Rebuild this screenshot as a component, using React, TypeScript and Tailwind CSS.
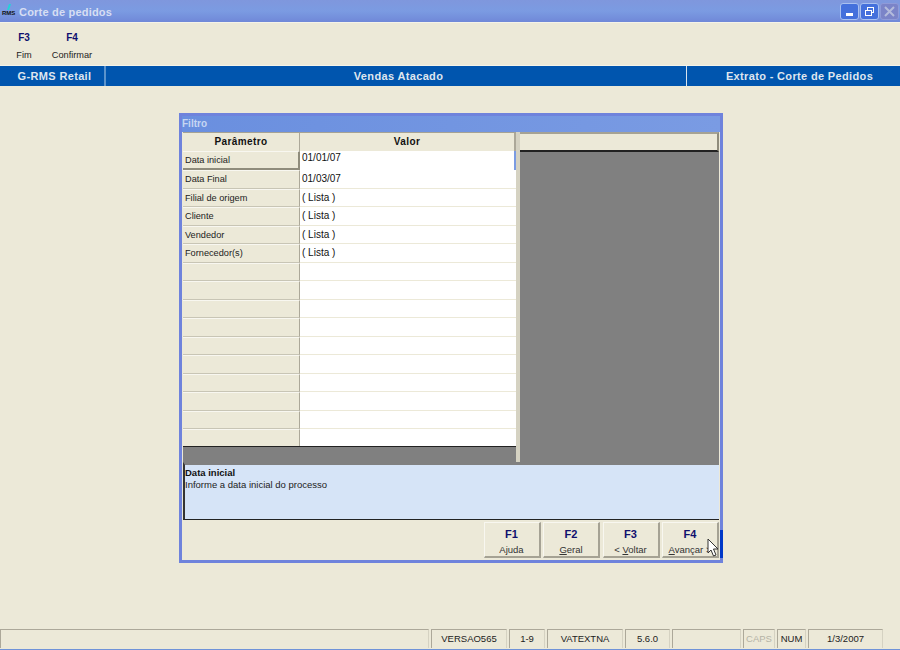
import React from "react";

const sans = "font-['Liberation_Sans',Arial,sans-serif]";

const rows = [
  ["Data inicial", "01/01/07"],
  ["Data Final", "01/03/07"],
  ["Filial de origem", "( Lista )"],
  ["Cliente", "( Lista )"],
  ["Vendedor", "( Lista )"],
  ["Fornecedor(s)", "( Lista )"],
  ["", ""],
  ["", ""],
  ["", ""],
  ["", ""],
  ["", ""],
  ["", ""],
  ["", ""],
  ["", ""],
  ["", ""],
  ["", ""],
];

const status = [
  { w: "w-[429px]", t: "" },
  { w: "w-[76px]", t: "VERSAO565" },
  { w: "w-[36px]", t: "1-9" },
  { w: "w-[76px]", t: "VATEXTNA" },
  { w: "w-[45px]", t: "5.6.0" },
  { w: "w-[69px]", t: "" },
  { w: "w-[32px]", t: "CAPS", off: true },
  { w: "w-[29px]", t: "NUM" },
  { w: "w-[75px]", t: "1/3/2007" },
];

const FnButton = (props: { fkey: string; children: React.ReactNode }) => (
  <div className="w-[57px] h-[36px] bg-[#ece9d8] border-t border-l border-t-[#f8f7f0] border-l-[#f8f7f0] border-r-2 border-b-2 border-r-[#a5a294] border-b-[#a5a294] flex flex-col items-center">
    <div className="text-[11px] leading-[12px] mt-[5px] font-bold text-[#10106e]">{props.fkey}</div>
    <div className="text-[9.5px] leading-[12px] mt-[4px] text-[#333]">{props.children}</div>
  </div>
);

export default function App() {
  return (
    <div className={`${sans} w-[900px] h-[650px] bg-[#ece9d8] flex flex-col overflow-hidden relative`}>
      {/* title bar */}
      <div className="h-[23px] shrink-0 bg-gradient-to-b from-[#7f97dd] via-[#7b9be2] to-[#7088d8] border-b border-[#f5f3e8] flex items-center">
        <svg width="16" height="14" viewBox="0 0 16 14" className="ml-[1px] shrink-0">
          <path d="M8 0 L10 0 L8 6 L6 6 Z" fill="#22d4d8" />
          <text x="1" y="11" fontSize="6" fontWeight="bold" fill="#111">RMS</text>
        </svg>
        <span className="ml-[2px] mt-[2px] text-[11px] font-bold tracking-[0.2px] text-[#d7def3]">Corte de pedidos</span>
        <div className="ml-auto flex gap-[1px] mr-[1px]">
          <div className="w-[19px] h-[17px] rounded-[3px] bg-[#4470dc] border border-[#a9c0f0] flex items-end justify-center pb-[3px]">
            <div className="w-[7px] h-[3px] bg-white" />
          </div>
          <div className="w-[19px] h-[17px] rounded-[3px] bg-[#4470dc] border border-[#a9c0f0] flex items-center justify-center">
            <svg width="11" height="11" viewBox="0 0 11 11" fill="none" stroke="white">
              <rect x="3.5" y="1.5" width="6" height="5" />
              <rect x="1.5" y="4.5" width="6" height="5" fill="#4470dc" />
            </svg>
          </div>
          <div className="w-[19px] h-[17px] rounded-[3px] bg-[#7b84c8] border border-[#8f9ad8] flex items-center justify-center">
            <svg width="11" height="11" viewBox="0 0 11 11" stroke="#b4bbdc" strokeWidth="2">
              <path d="M1 1 L10 10 M10 1 L1 10" />
            </svg>
          </div>
        </div>
      </div>

      {/* toolbar */}
      <div className="h-[42px] shrink-0 flex">
        <div className="w-[48px] flex flex-col items-center">
          <div className="text-[10px] leading-[12px] mt-[9px] font-bold text-[#10106e]">F3</div>
          <div className="text-[9.2px] leading-[12px] mt-[5px] text-[#222]">Fim</div>
        </div>
        <div className="w-[48px] flex flex-col items-center">
          <div className="text-[10px] leading-[12px] mt-[9px] font-bold text-[#10106e]">F4</div>
          <div className="text-[9.2px] leading-[12px] mt-[5px] text-[#222]">Confirmar</div>
        </div>
      </div>

      {/* blue band */}
      <div className="h-[21px] shrink-0 bg-[#0055ae] border-t border-[#f5f3e8] flex items-center text-[11px] font-bold tracking-[0.35px] text-[#dfe6ee]">
        <div className="w-[106px] h-full pl-[5px] text-center leading-[20px] border-r-2 border-[#5b93cc]">G-RMS Retail</div>
        <div className="w-[581px] h-full pl-[5px] text-center leading-[20px] border-r border-[#d7e3ee]">Vendas Atacado</div>
        <div className="flex-1 pl-[12px] text-center leading-[20px]">Extrato - Corte de Pedidos</div>
      </div>

      {/* filter window */}
      <div className="ml-[179px] mt-[27px] w-[544px] h-[450px] shrink-0 border-[3px] border-[#6f83dc] bg-[#ece9d8] flex flex-col">
        <div className="h-[16px] shrink-0 bg-gradient-to-r from-[#6a8fdf] to-[#7a9be3] text-[10px] leading-[16px] font-bold text-[#c6d6f2]">
          Filtro
        </div>
        <div className="mx-px flex h-[330px] shrink-0">
          {/* grid */}
          <div className="w-[333px] shrink-0 flex flex-col">
            <div className="flex h-[19px] shrink-0 border-t border-[#a5a294]">
              <div className="w-[117px] text-center text-[10px] leading-[18px] font-bold tracking-[0.4px] text-[#111] border-r border-[#aca899]">Parâmetro</div>
              <div className="flex-1 text-center text-[10px] leading-[18px] font-bold tracking-[0.4px] text-[#111] border-r-2 border-[#aca899]">Valor</div>
            </div>
            <div className="flex-1 overflow-hidden">
              {rows.map((r, i) => (
                <div key={i} className={`flex ${i === 0 ? "h-[19px]" : "h-[18.5px]"}`}>
                  <div className={`w-[117px] text-[9.2px] leading-[17px] pl-[2px] text-[#222] border-r border-[#aca899] border-t border-t-[#f8f7f0] ${i === 0 ? "border-b-2 border-b-[#8f8c7c] border-r-2 border-r-[#8f8c7c]" : "border-b border-b-[#c8c5b5]"}`}>
                    {r[0]}
                  </div>
                  <div className={`flex-1 bg-white text-[10px] pl-[2px] text-[#111] ${i === 0 ? "leading-[13px] border-r-2 border-[#7b9be2]" : "leading-[18px] border-b border-b-[#ece9d8]"}`}>
                    {r[1]}
                  </div>
                </div>
              ))}
            </div>
            <div className="h-[16px] shrink-0 bg-[#808080] border-t border-[#222]" />
          </div>
          {/* splitter */}
          <div className="w-[4px] shrink-0 bg-[#d5d2c2]" />
          {/* right pane */}
          <div className="flex-1 flex flex-col bg-[#808080]">
            <div className="h-[20px] shrink-0 bg-[#ece9d8] border-t-2 border-[#a5a294] border-b-2 border-b-[#222] border-r-2 border-r-[#8f8c7c]" />
          </div>
        </div>
        {/* help */}
        <div className="mx-px h-[58px] shrink-0 bg-[#d6e4f7] border-t-[3px] border-l-2 border-b border-t-[#808080] border-l-[#333] border-b-[#222] text-[9.5px] leading-[12px] text-[#222] pt-[2px]">
          <div className="font-bold text-[#111]">Data inicial</div>
          <div>Informe a data inicial do processo</div>
        </div>
        {/* buttons */}
        <div className="flex-1 flex justify-end items-start gap-[2.5px] pt-[2px] pr-[1px] relative">
          <FnButton fkey="F1">Ajuda</FnButton>
          <FnButton fkey="F2"><u>G</u>eral</FnButton>
          <FnButton fkey="F3">&lt; <u>V</u>oltar</FnButton>
          <FnButton fkey="F4"><u>A</u>vançar &gt;</FnButton>
          <svg width="13" height="20" viewBox="0 0 13 20" className="absolute right-[0px] top-[18px]">
            <path d="M1 1 L1 15 L4 12 L6.5 18 L9 17 L6.5 11 L11 11 Z" fill="white" stroke="#333" strokeWidth="1" />
          </svg>
          <div className="absolute right-[-3px] top-[10px] w-[3px] h-[28px] bg-[#0038c8]" />
        </div>
      </div>

      {/* status bar */}
      <div className="mt-auto h-[21px] shrink-0 flex border-b border-[#6f93d8]">
        {status.map((s, i) => (
          <div
            key={i}
            className={`${s.w} h-[19px] mr-[2px] shrink-0 border-t border-l border-[#aca899] border-r border-r-[#d5d2c2] text-center text-[9.5px] leading-[17px] ${s.off ? "text-[#b5b3a6]" : "text-[#222]"}`}
          >
            {s.t}
          </div>
        ))}
      </div>
    </div>
  );
}
